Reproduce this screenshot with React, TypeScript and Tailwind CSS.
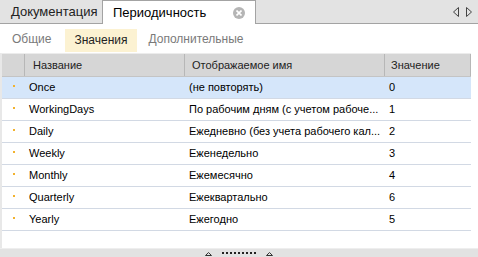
import React from "react";

const rows = [
  { name: "Once", title: "(не повторять)", value: "0" },
  { name: "WorkingDays", title: "По рабочим дням (с учетом рабоче...", value: "1" },
  { name: "Daily", title: "Ежедневно (без учета рабочего кал...", value: "2" },
  { name: "Weekly", title: "Еженедельно", value: "3" },
  { name: "Monthly", title: "Ежемесячно", value: "4" },
  { name: "Quarterly", title: "Ежеквартально", value: "6" },
  { name: "Yearly", title: "Ежегодно", value: "5" },
];

function App() {
  return (
    <div className="w-[478px] h-[257px] bg-white overflow-hidden flex flex-col font-['Liberation_Sans',Arial,sans-serif] text-black">
      {/* tabs */}
      <div className="h-[24px] bg-[#e3e3e3] border-b border-[#a3a3a3] flex items-end relative">
        <div className="h-[23px] w-[102px] flex items-center pl-[11px] text-[13px] text-[#222]">Документация</div>
        <div className="w-[154px] bg-white border border-b-0 border-[#a3a3a3] flex items-center pl-[10px] text-[13px] mb-[-1px] h-[24px]">
          <span>Периодичность</span>
          <span className="ml-auto mr-[10px] w-[12px] h-[12px] rounded-full bg-[#b5b5b5] flex items-center justify-center">
            <svg width="6" height="6" viewBox="0 0 6 6">
              <path d="M0.5 0.5L5.5 5.5M5.5 0.5L0.5 5.5" stroke="white" strokeWidth="1.6" />
            </svg>
          </span>
        </div>
        <div className="ml-auto mr-[6px] mb-[6px] flex items-center gap-[7px]">
          <svg width="6" height="10" viewBox="0 0 6 10">
            <path d="M5.5 0.5L0.5 5L5.5 9.5Z" fill="none" stroke="#444" />
          </svg>
          <svg width="6" height="10" viewBox="0 0 6 10">
            <path d="M0.5 0.5L5.5 5L0.5 9.5Z" fill="none" stroke="#444" />
          </svg>
        </div>
      </div>

      {/* sub tabs */}
      <div className="h-[29px] flex items-center text-[12px] pt-[1px]">
        <div className="pl-[12px] pr-[14px] text-[#7a7a7a]">Общие</div>
        <div className="h-[23px] mt-[2px] px-[9px] flex items-center bg-[#fcf2d2] text-[#222]">Значения</div>
        <div className="pl-[12px] text-[#7a7a7a]">Дополнительные</div>
      </div>

      {/* table */}
      <div className="flex-1 flex flex-col border-l-2 border-[#e8e8e8] border-t border-t-[#ececec] mr-[7px]">
        <div className="h-[23px] bg-[#d6d6d6] flex text-[11px] text-[#222] border-b border-[#c4c4c4]">
          <div className="w-[23px] border-r border-[#b7b7b7]" />
          <div className="w-[160px] border-r border-[#b7b7b7] flex items-center pl-[8px]">Название</div>
          <div className="w-[200px] border-r border-[#b7b7b7] flex items-center pl-[7px]">Отображаемое имя</div>
          <div className="flex-1 border-r border-[#b7b7b7] flex items-center pl-[6px]">Значение</div>
        </div>
        {rows.map((r, i) => (
          <div
            key={r.name}
            className={`h-[22px] flex text-[11px] items-center border-b border-[#d2d9e4] ${i === 0 ? "bg-[#d5e6fa]" : "bg-white"}`}
          >
            <div className="w-[23px] flex justify-center">
              <span className="w-[2px] h-[2px] bg-[#f2b22e] mt-[-3px]" />
            </div>
            <div className="w-[160px] pl-[4px]">{r.name}</div>
            <div className="w-[200px] pl-[4px]">{r.title}</div>
            <div className="flex-1 pl-[4px]">{r.value}</div>
          </div>
        ))}
        <div className="flex-1" />
      </div>

      {/* splitter */}
      <div className="h-[9px] bg-[#e2e2e2] flex items-end justify-center gap-[10px] pb-[1px] border-t border-[#eeeeee]">
        <svg width="7" height="4" viewBox="0 0 7 4">
          <path d="M3.5 0.5L6.5 3.5H0.5Z" fill="none" stroke="#333" />
        </svg>
        <div className="flex gap-[2px] mb-[2px]">
          {Array.from({ length: 9 }).map((_, i) => (
            <span key={i} className="w-[2px] h-[2px] bg-[#222]" />
          ))}
        </div>
        <svg width="7" height="4" viewBox="0 0 7 4">
          <path d="M3.5 0.5L6.5 3.5H0.5Z" fill="none" stroke="#333" />
        </svg>
      </div>
    </div>
  );
}

export default App;
